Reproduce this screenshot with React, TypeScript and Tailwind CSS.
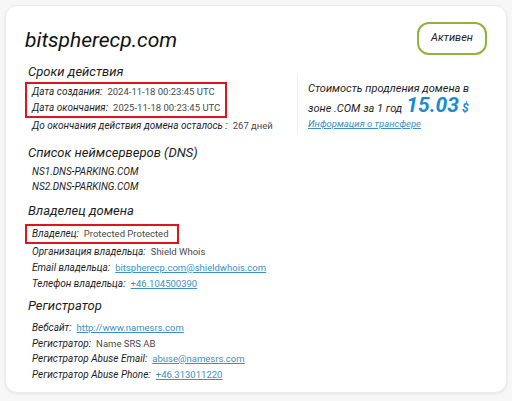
import React from 'react';

// Row data for the simple label/value lines
type Row = { label: string; value: string; link?: boolean };

const ownerRows: Row[] = [
  { label: 'Организация владельца:', value: 'Shield Whois' },
  { label: 'Email владельца:', value: 'bitspherecp.com@shieldwhois.com', link: true },
  { label: 'Телефон владельца:', value: '+46.104500390', link: true },
];

const registrarRows: Row[] = [
  { label: 'Вебсайт:', value: 'http://www.namesrs.com', link: true },
  { label: 'Регистратор:', value: 'Name SRS AB' },
  { label: 'Регистратор Abuse Email:', value: 'abuse@namesrs.com', link: true },
  { label: 'Регистратор Abuse Phone:', value: '+46.313011220', link: true },
];

function InfoRow({ label, value, link, tight }: Row & { tight?: boolean }) {
  return (
    <div className={(tight ? 'h-[15.5px] leading-[15.5px]' : 'h-[16px] leading-[16px]') + ' text-[10px] whitespace-nowrap'}>
      <span className="italic text-[#1e1e1e]">{label}</span>
      <span className="ml-[5px] text-[9.5px]">
        {link ? (
          <a href="#" className="text-[#3d8fc6] underline underline-offset-1">{value}</a>
        ) : (
          <span className="text-[#4a4a4a]">{value}</span>
        )}
      </span>
    </div>
  );
}

function Heading({ children }: { children: React.ReactNode }) {
  return <div className="italic text-[13px] leading-[18px] text-[#1e1e1e]">{children}</div>;
}

export default function App() {
  return (
    <div className="w-[512px] h-[401px] bg-[#f7f7f7] p-[5px] pb-[8px] font-['Roboto',sans-serif]">
      <div className="h-full bg-white rounded-[12px] border border-[#ececec] shadow-[0_1px_3px_rgba(0,0,0,0.08)] pl-[19px] pr-[19px]">
        {/* Header: domain name + status */}
        <div className="flex justify-between items-start pt-[16px]">
          <h1 className="mt-[4px] italic text-[21px] leading-[28px] text-[#111]">bitspherecp.com</h1>
          <div className="h-[33px] px-[12px] flex items-center border-2 border-[#8db53c] rounded-[12px] italic text-[11px] text-[#222]">
            Активен
          </div>
        </div>

        <div className="mt-[8px] ml-[3px]">
          <Heading>Сроки действия</Heading>
        </div>

        <div className="flex h-[53px]">
          <div className="w-[268px] shrink-0">
            <div className="mt-[1px] inline-block border-2 border-[#e0141c] pl-[5px] pr-[5px]">
              <InfoRow label="Дата создания:" value="2024-11-18 00:23:45 UTC" />
              <InfoRow label="Дата окончания:" value="2025-11-18 00:23:45 UTC" />
            </div>
            <div className="pl-[7px]">
              <InfoRow label="До окончания действия домена осталось :" value="267 дней" />
            </div>
          </div>

          {/* Renewal price */}
          <div className="ml-[4px] mt-[-6px] border-l border-[#f0f0f0] pl-[10px] pt-[5px] h-[58px]">
            <div className="italic text-[11px] leading-[17px] text-[#1e1e1e] whitespace-nowrap">Стоимость продления домена в</div>
            <div className="italic text-[11px] h-[17px] text-[#1e1e1e] whitespace-nowrap flex items-baseline">
              зоне .COM за 1 год
              <span className="ml-[4px] font-bold italic text-[21px] leading-[17px] text-[#1a8bd2]">15.03</span>
              <span className="ml-[3px] font-bold text-[12px] leading-[17px] text-[#1a8bd2]">$</span>
            </div>
            <a href="#" className="block mt-[1px] italic text-[9.5px] leading-[17px] text-[#3d8fc6] underline">Информация о трансфере</a>
          </div>
        </div>

        <div className="mt-[10px] ml-[3px]">
          <Heading>Список неймсерверов (DNS)</Heading>
        </div>
        <div className="mt-[2px] pl-[7px] italic text-[10px] leading-[15px] text-[#1e1e1e]">
          <div>NS1.DNS-PARKING.COM</div>
          <div>NS2.DNS-PARKING.COM</div>
        </div>

        <div className="mt-[8px] ml-[3px]">
          <Heading>Владелец домена</Heading>
        </div>
        <div className="mt-[1px] inline-block border-2 border-[#e0141c] pl-[5px] pr-[8px]">
          <InfoRow label="Владелец:" value="Protected Protected" />
        </div>
        <div className="pl-[7px]">
          {ownerRows.map(r => <InfoRow key={r.label} {...r} />)}
        </div>

        <div className="mt-[5px] ml-[3px]">
          <Heading>Регистратор</Heading>
        </div>
        <div className="mt-[5px] pl-[7px]">
          {registrarRows.map(r => <InfoRow key={r.label} {...r} tight />)}
        </div>
      </div>
    </div>
  );
}
